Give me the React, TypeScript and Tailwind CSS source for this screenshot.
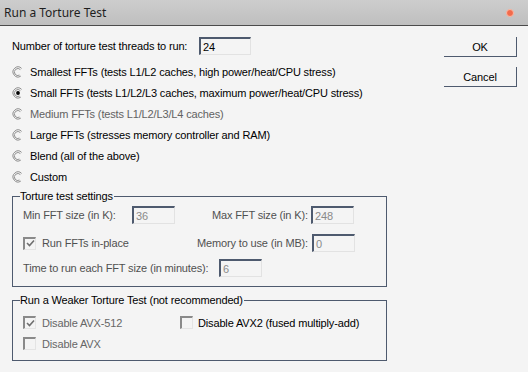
import React from 'react';

const Radio: React.FC<{ checked?: boolean }> = ({ checked }) => (
  <svg width="12" height="12" viewBox="0 0 12 12" className="shrink-0">
    <path d="M9.6 2.4 A5 5 0 1 0 8.8 10.1" fill="none" stroke="#8c8c8c" strokeWidth="1" />
    <path d="M8.4 3.6 A3.5 3.5 0 1 0 7.6 9.1" fill="none" stroke="#7a7a7a" strokeWidth="0.8" />
    {checked && <circle cx="6" cy="6" r="1.9" fill="#000" />}
  </svg>
);

const Check: React.FC<{ checked?: boolean }> = ({ checked }) => (
  <span className="w-[13px] h-[13px] shrink-0 border-t-2 border-l-2 border-t-[#8a8a8a] border-l-[#8a8a8a] border-r border-b border-r-[#e4e4e4] border-b-[#e4e4e4] flex items-center justify-center">
    {checked && (
      <svg width="9" height="9" viewBox="0 0 9 9">
        <path d="M1 4 L3.5 6.5 L8 1.5" fill="none" stroke="#6f6f6f" strokeWidth="1.6" />
      </svg>
    )}
  </span>
);

const Field: React.FC<{ value: string; className?: string; dim?: boolean }> = ({ value, className = '', dim }) => (
  <div
    className={`h-[18px] shrink-0 border-t-2 border-l-2 border-t-[#4e5a6e] border-l-[#4e5a6e] border-r border-b border-r-[#e2e2e2] border-b-[#e2e2e2] flex items-center pl-[2px] ${dim ? 'text-[#8a8a8a]' : 'text-black'} ${className}`}
  >
    {value}
  </div>
);

const radios = [
  { label: 'Smallest FFTs (tests L1/L2 caches, high power/heat/CPU stress)' },
  { label: 'Small FFTs (tests L1/L2/L3 caches, maximum power/heat/CPU stress)', checked: true },
  { label: 'Medium FFTs (tests L1/L2/L3/L4 caches)', dim: true },
  { label: 'Large FFTs (stresses memory controller and RAM)' },
  { label: 'Blend (all of the above)' },
  { label: 'Custom' },
];

export default function App() {
  return (
    <div
      className="w-[528px] h-[372px] bg-[#f4f4f4] text-[11px] leading-[14px] tracking-[-0.15px] text-black overflow-hidden"
      style={{ fontFamily: '"Liberation Sans", Arial, sans-serif' }}
    >
      <div className="h-[26px] bg-gradient-to-b from-[#cdcdcd] to-[#bfbfbf] border-b border-[#4b4b4b] flex items-center justify-between pl-[4px] pr-[14px]">
        <span className="text-[12px] tracking-normal text-[#1e1e1e]" style={{ fontFamily: '"Noto Sans", sans-serif' }}>
          Run a Torture Test
        </span>
        <span className="w-[8px] h-[8px] rounded-full bg-[#f26b4c] border border-[#fbb9a4]" />
      </div>

      <div className="flex">
        <div className="ml-[12px] w-[375px]">
          <div className="flex items-center h-[18px] mt-[11px]">
            <span className="w-[187px]">Number of torture test threads to run:</span>
            <Field value="24" className="w-[52px]" />
          </div>

          <div className="mt-[6px] flex flex-col">
            {radios.map((r) => (
              <div key={r.label} className="h-[21px] flex items-center gap-[6px]">
                <Radio checked={r.checked} />
                <span className={r.dim ? 'text-[#626262]' : ''}>{r.label}</span>
              </div>
            ))}
          </div>

          <fieldset className="mt-[2px] border border-[#4e5a6e] pl-[10px] pb-[8px] h-[98px] text-[#505050]">
            <legend className="-ml-[3px] pr-[1px] text-black">Torture test settings</legend>
            <div className="flex items-center h-[18px] mt-[3px]">
              <span className="w-[109px]">Min FFT size (in K):</span>
              <Field value="36" dim className="w-[43px]" />
              <span className="ml-[37px] w-[99px]">Max FFT size (in K):</span>
              <Field value="248" dim className="w-[43px]" />
            </div>
            <div className="flex items-center h-[18px] mt-[10px]">
              <div className="w-[174px] flex items-center gap-[6px]">
                <Check checked />
                <span>Run FFTs in-place</span>
              </div>
              <span className="w-[115px]">Memory to use (in MB):</span>
              <Field value="0" dim className="w-[43px]" />
            </div>
            <div className="flex items-center h-[18px] mt-[7px]">
              <span className="w-[196px]">Time to run each FFT size (in minutes):</span>
              <Field value="6" dim className="w-[43px]" />
            </div>
          </fieldset>

          <fieldset className="mt-[6px] border border-[#4e5a6e] pl-[10px] h-[68px]">
            <legend className="-ml-[3px] pr-[1px]">Run a Weaker Torture Test (not recommended)</legend>
            <div className="flex items-center h-[21px] mt-[5px]">
              <div className="w-[157px] flex items-center gap-[6px] text-[#666]">
                <Check checked />
                <span>Disable AVX-512</span>
              </div>
              <div className="flex items-center gap-[5px]">
                <Check />
                <span>Disable AVX2 (fused multiply-add)</span>
              </div>
            </div>
            <div className="flex items-center h-[21px] gap-[6px] text-[#666]">
              <Check />
              <span>Disable AVX</span>
            </div>
          </fieldset>
        </div>

        <div className="ml-[57px] pt-[11px] flex flex-col gap-[10px]">
          <button className="w-[73px] h-[20px] border-r border-b border-[#4e5a6e] bg-[#f4f4f4] text-[11px]">OK</button>
          <button className="w-[73px] h-[20px] border-r border-b border-[#4e5a6e] bg-[#f4f4f4] text-[11px]">Cancel</button>
        </div>
      </div>
    </div>
  );
}
